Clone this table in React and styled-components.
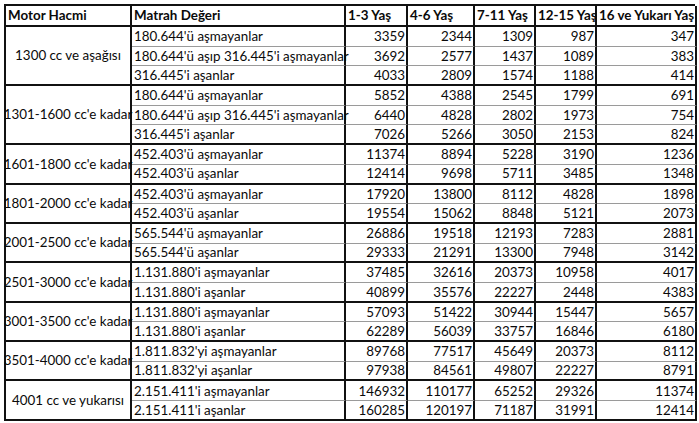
import React from "react";
import styled, { createGlobalStyle } from "styled-components";

const GlobalStyle = createGlobalStyle`
  html, body { margin: 0; padding: 0; background: #fff; }
  * { box-sizing: border-box; }
`;

const Page = styled.div`
  padding: 4px 0 0 4px;
  font-family: Lato, "Open Sans", sans-serif;
  font-size: 13.4px;
  color: #0a0a0a;
`;

const Grid = styled.div`
  display: grid;
  width: 691px;
  grid-template-columns: 126px 214px 62px 67px 61px 61px 100px;
  grid-template-rows: 21px;
  grid-auto-rows: 19.7px;
  border-top: 2px solid #111;
  border-left: 2px solid #111;
`;

const Cell = styled.div`
  display: flex;
  align-items: center;
  white-space: nowrap;
  overflow: visible;
  border-right: 2px solid #111;
  border-bottom: ${p => (p.$end ? "2px solid #111" : "1px solid #9a9a9a")};
  line-height: 1;
  padding-top: 1px;
`;

const HeadCell = styled(Cell)`
  font-weight: 700;
  font-size: 13.4px;
  padding-left: 2px;
  border-bottom: 2px solid #111;
`;

const MotorCell = styled(Cell)`
  grid-row: span ${p => p.$span};
  justify-content: center;
  border-bottom: 2px solid #111;
  position: relative;
  z-index: 1;
`;

const TextCell = styled(Cell)`
  padding-left: 2px;
`;

const NumCell = styled(Cell)`
  justify-content: flex-end;
  padding-right: 1px;
`;

const headers = ["Motor Hacmi", "Matrah Değeri", "1-3 Yaş", "4-6 Yaş", "7-11 Yaş", "12-15 Yaş", "16 ve Yukarı Yaş"];

const groups = [
  {
    motor: "1300 cc ve aşağısı",
    rows: [
      ["180.644'ü aşmayanlar", 3359, 2344, 1309, 987, 347],
      ["180.644'ü aşıp 316.445'i aşmayanlar", 3692, 2577, 1437, 1089, 383],
      ["316.445'i aşanlar", 4033, 2809, 1574, 1188, 414],
    ],
  },
  {
    motor: "1301-1600 cc'e kadar",
    rows: [
      ["180.644'ü aşmayanlar", 5852, 4388, 2545, 1799, 691],
      ["180.644'ü aşıp 316.445'i aşmayanlar", 6440, 4828, 2802, 1973, 754],
      ["316.445'i aşanlar", 7026, 5266, 3050, 2153, 824],
    ],
  },
  {
    motor: "1601-1800 cc'e kadar",
    rows: [
      ["452.403'ü aşmayanlar", 11374, 8894, 5228, 3190, 1236],
      ["452.403'ü aşanlar", 12414, 9698, 5711, 3485, 1348],
    ],
  },
  {
    motor: "1801-2000 cc'e kadar",
    rows: [
      ["452.403'ü aşmayanlar", 17920, 13800, 8112, 4828, 1898],
      ["452.403'ü aşanlar", 19554, 15062, 8848, 5121, 2073],
    ],
  },
  {
    motor: "2001-2500 cc'e kadar",
    rows: [
      ["565.544'ü aşmayanlar", 26886, 19518, 12193, 7283, 2881],
      ["565.544'ü aşanlar", 29333, 21291, 13300, 7948, 3142],
    ],
  },
  {
    motor: "2501-3000 cc'e kadar",
    rows: [
      ["1.131.880'i aşmayanlar", 37485, 32616, 20373, 10958, 4017],
      ["1.131.880'i aşanlar", 40899, 35576, 22227, 2448, 4383],
    ],
  },
  {
    motor: "3001-3500 cc'e kadar",
    rows: [
      ["1.131.880'i aşmayanlar", 57093, 51422, 30944, 15447, 5657],
      ["1.131.880'i aşanlar", 62289, 56039, 33757, 16846, 6180],
    ],
  },
  {
    motor: "3501-4000 cc'e kadar",
    rows: [
      ["1.811.832'yi aşmayanlar", 89768, 77517, 45649, 20373, 8112],
      ["1.811.832'yi aşanlar", 97938, 84561, 49807, 22227, 8791],
    ],
  },
  {
    motor: "4001 cc ve yukarısı",
    rows: [
      ["2.151.411'i aşmayanlar", 146932, 110177, 65252, 29326, 11374],
      ["2.151.411'i aşanlar", 160285, 120197, 71187, 31991, 12414],
    ],
  },
];

export default function App() {
  return (
    <Page>
      <GlobalStyle />
      <Grid>
        {headers.map(h => (
          <HeadCell key={h}>{h}</HeadCell>
        ))}
        {groups.map((g, gi) => (
          <React.Fragment key={gi}>
            <MotorCell $span={g.rows.length}>{g.motor}</MotorCell>
            {g.rows.map((r, ri) => {
              const end = ri === g.rows.length - 1;
              return (
                <React.Fragment key={ri}>
                  <TextCell $end={end}>{r[0]}</TextCell>
                  {r.slice(1).map((n, ni) => (
                    <NumCell key={ni} $end={end}>{n}</NumCell>
                  ))}
                </React.Fragment>
              );
            })}
          </React.Fragment>
        ))}
      </Grid>
    </Page>
  );
}
